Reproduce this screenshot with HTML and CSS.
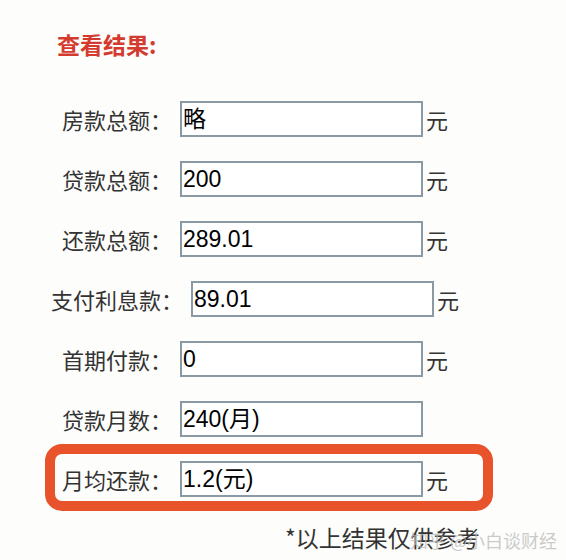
FILE: index.html
```html
<!DOCTYPE html>
<html lang="zh">
<head>
<meta charset="utf-8">
<title>查看结果</title>
<link rel="stylesheet" href="styles.css">
</head>
<body>
<div class="page">
  <h2 class="title">查看结果:</h2>
  <div class="form">
    <div class="row"><span class="label">房款总额：</span><div class="field">略</div><span class="unit">元</span></div>
    <div class="row"><span class="label">贷款总额：</span><div class="field">200</div><span class="unit">元</span></div>
    <div class="row"><span class="label">还款总额：</span><div class="field">289.01</div><span class="unit">元</span></div>
    <div class="row"><span class="label">支付利息款：</span><div class="field">89.01</div><span class="unit">元</span></div>
    <div class="row"><span class="label">首期付款：</span><div class="field">0</div><span class="unit">元</span></div>
    <div class="row"><span class="label">贷款月数：</span><div class="field">240(月)</div><span class="unit hidden">元</span></div>
    <div class="highlight">
      <div class="row row-start"><span class="label">月均还款：</span><div class="field">1.2(元)</div><span class="unit">元</span></div>
    </div>
  </div>
  <p class="note">*以上结果仅供参考</p>
  <span class="watermark">知乎 @小白谈财经</span>
</div>
</body>
</html>
```
FILE: styles.css
```css
html, body {
  margin: 0;
  padding: 0;
  background: #fdfdfb;
}
.page {
  position: relative;
  width: 566px;
  height: 560px;
  overflow: hidden;
  font-family: "Noto Sans CJK SC", sans-serif;
}
.title {
  margin: 0;
  padding: 29px 0 0 57px;
  font-size: 23px;
  line-height: 30px;
  font-weight: 700;
  color: #d43b2f;
}
.form {
  margin-top: 42px;
  width: 510px;
  display: flex;
  flex-direction: column;
  gap: 24px;
}
.row {
  display: flex;
  justify-content: center;
  align-items: center;
  height: 36px;
}
.row-start {
  justify-content: flex-start;
}
.label {
  font-size: 22px;
  line-height: 36px;
  color: #333;
  font-weight: 400;
  margin-right: 8px;
  white-space: nowrap;
}
.field {
  box-sizing: border-box;
  width: 243px;
  height: 36px;
  border: 2px solid #8a9aa5;
  background: #fff;
  padding: 0 1px;
  font-family: "Liberation Sans", Arial, "Noto Sans CJK SC", sans-serif;
  font-size: 23px;
  line-height: 32px;
  color: #000;
}
.unit {
  margin-left: 3px;
  font-size: 22px;
  line-height: 36px;
  color: #333;
}
.hidden {
  visibility: hidden;
}
.highlight {
  box-sizing: border-box;
  width: 448px;
  margin: -17px 0 0 45px;
  border: 10px solid #e8532b;
  border-radius: 17px;
  padding: 7px 0 4px 7px;
  background: #fdfdfb;
}
.note {
  margin: 11px 0 0 285px;
  font-size: 23px;
  line-height: 30px;
  color: #333;
}
.watermark {
  position: absolute;
  left: 410px;
  top: 526px;
  font-size: 18px;
  line-height: 28px;
  color: rgba(185, 185, 185, 0.75);
  white-space: nowrap;
}
```
